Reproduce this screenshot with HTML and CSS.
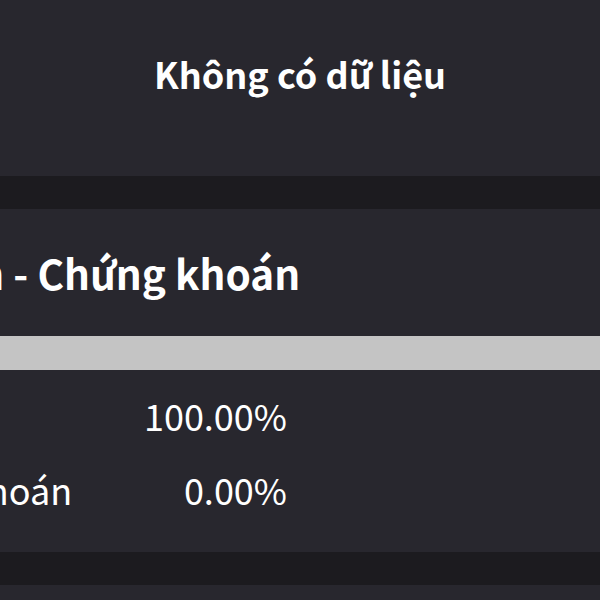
FILE: index.html
```html
<!DOCTYPE html>
<html lang="vi">
<head>
<meta charset="utf-8">
<link rel="stylesheet" href="styles.css">
</head>
<body>
  <section class="panel empty">
    <p class="empty-text">Không có dữ liệu</p>
  </section>
  <div class="divider"></div>
  <section class="panel card">
    <div class="card-head">
      <h2 class="card-title">Tiền - Chứng khoán</h2>
    </div>
    <div class="bar"></div>
    <div class="rows">
      <div class="row"><span class="label">Tiền</span><span class="value">100.00%</span></div>
      <div class="row"><span class="label">Chứng khoán</span><span class="value">0.00%</span></div>
    </div>
  </section>
  <div class="divider"></div>
  <section class="panel tail"></section>
</body>
</html>
```

FILE: styles.css
```css
html, body {
  margin: 0;
  padding: 0;
}
body {
  background: #28272e;
  color: #ffffff;
  font-family: "Noto Sans CJK SC", "Noto Sans", sans-serif;
  overflow: hidden;
  width: 600px;
  height: 600px;
}
.panel {
  background: #28272e;
}
.empty {
  height: 176px;
  display: flex;
  justify-content: center;
  align-items: flex-start;
}
.empty-text {
  margin: 0;
  padding-top: 48px;
  font-size: 36px;
  font-weight: 700;
  line-height: 50px;
}
.divider {
  height: 33px;
  background: #1c1b1f;
}
.card {
  height: 343px;
  display: flex;
  flex-direction: column;
  overflow: hidden;
}
.card-head {
  height: 127px;
  display: flex;
  align-items: center;
}
.card-title {
  margin: 0 0 0 -83px;
  font-size: 40.5px;
  font-weight: 700;
  line-height: 56px;
  white-space: nowrap;
}
.bar {
  height: 34px;
  background: #c4c4c4;
}
.rows {
  display: flex;
  flex-direction: column;
  padding-top: 19px;
  gap: 22px;
  margin-left: -150px;
}
.row {
  display: flex;
  align-items: center;
  height: 52px;
  font-size: 36px;
  line-height: 52px;
}
.label {
  width: 240px;
  white-space: nowrap;
}
.value {
  width: 197px;
  text-align: right;
}
.tail {
  height: 40px;
}
```
